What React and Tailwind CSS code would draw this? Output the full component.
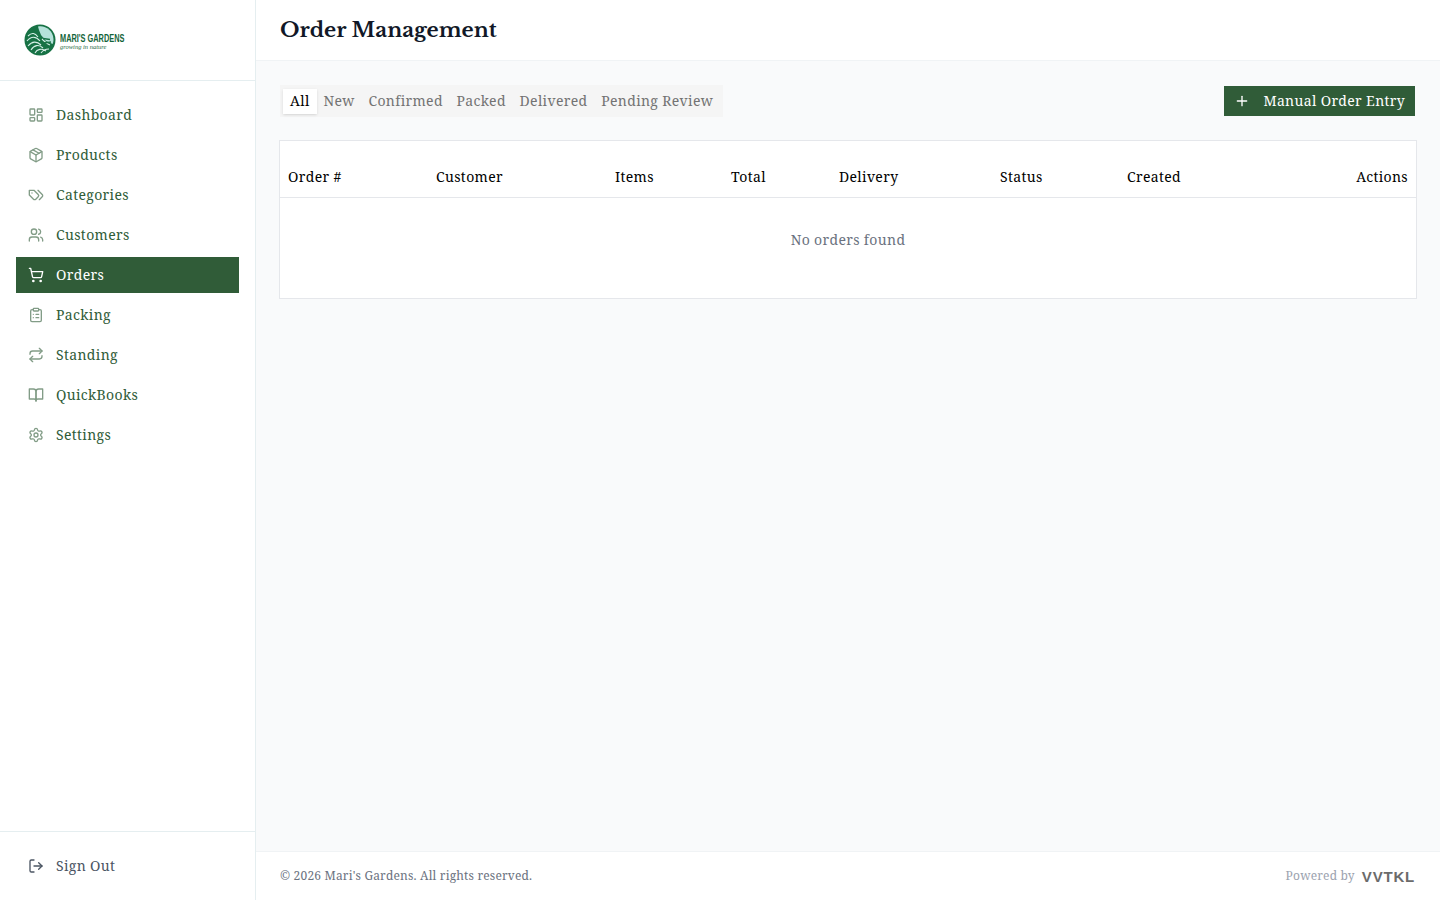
import {
  ClipboardList,
  LayoutDashboard,
  LogOut,
  Package,
  Plus,
  Repeat,
  Settings,
  ShoppingCart,
  Users,
} from 'lucide-react';

const TagsIcon = ({ size, strokeWidth, className }) => (
  <svg width={size} height={size} viewBox="0 0 24 24" fill="none" stroke="currentColor" strokeWidth={strokeWidth} strokeLinecap="round" strokeLinejoin="round" className={className}>
    <path d="M9 5H2v7l6.29 6.29c.94.94 2.48.94 3.42 0l3.58-3.58c.94-.94.94-2.48 0-3.42L9 5Z" />
    <path d="M6 9.01V9" />
    <path d="m15 5 6.3 6.3a2.4 2.4 0 0 1 0 3.4L17 19" />
  </svg>
);

const BookIcon = ({ size, strokeWidth, className }) => (
  <svg width={size} height={size} viewBox="0 0 24 24" fill="none" stroke="currentColor" strokeWidth={strokeWidth} strokeLinecap="round" strokeLinejoin="round" className={className}>
    <path d="M2 3h6a4 4 0 0 1 4 4v14a3 3 0 0 0-3-3H2z" />
    <path d="M22 3h-6a4 4 0 0 0-4 4v14a3 3 0 0 1 3-3h7z" />
  </svg>
);

const navItems = [
  { label: 'Dashboard', icon: LayoutDashboard },
  { label: 'Products', icon: Package },
  { label: 'Categories', icon: TagsIcon },
  { label: 'Customers', icon: Users },
  { label: 'Orders', icon: ShoppingCart, active: true },
  { label: 'Packing', icon: ClipboardList },
  { label: 'Standing', icon: Repeat },
  { label: 'QuickBooks', icon: BookIcon },
  { label: 'Settings', icon: Settings },
];

const tabs = ['New', 'Confirmed', 'Packed', 'Delivered', 'Pending Review'];

const columns = [
  { label: 'Order #', width: 'w-[148px]' },
  { label: 'Customer', width: 'w-[179px]' },
  { label: 'Items', width: 'w-[116px]' },
  { label: 'Total', width: 'w-[108px]' },
  { label: 'Delivery', width: 'w-[161px]' },
  { label: 'Status', width: 'w-[127px]' },
  { label: 'Created', width: 'w-[150px]' },
];

const Logo = () => (
  <div className="flex items-center gap-[4px]">
    <svg width="32" height="32" viewBox="0 0 32 32" fill="none">
      <circle cx="16" cy="16" r="15.5" fill="#177245" />
      <path d="M14 2.5C21 1 29 6 29.5 15C29.5 17 29.2 18.5 28.7 20L22 17L17 11L15 6Z" fill="#b5e2da" />
      <path d="M4 12C8 8 11 9 14 13M3 17C7 12 12 12 16 17M4 22C8 17 13 17 17 21M7 26C10 21 15 20 19 24M11 29C13 25 18 24 22 27M17 29C19 26 22 25 25 25M18 15C21 18 23 20 26 21" stroke="#d7efe8" strokeWidth="1.1" />
      <path d="M19 14.5L26 15.5M20 19L27 18" stroke="#177245" strokeWidth="1.3" />
    </svg>
    <div className="flex w-[65px] flex-col gap-[1px] pt-[3px]">
      <span className="origin-left scale-x-[0.67] font-['Liberation_Sans',sans-serif] text-[11px] leading-[10px] font-bold tracking-normal whitespace-nowrap text-[#14643a]">
        MARI'S GARDENS
      </span>
      <span className="font-['Liberation_Serif',serif] text-[6.5px] leading-[6px] tracking-normal italic whitespace-nowrap text-[#1f6b42]">
        growing in nature
      </span>
    </div>
  </div>
);

const App = () => {
  return (
    <div className="flex h-[900px] w-[1440px] overflow-hidden bg-[#f9fafb] font-['Noto_Serif','DejaVu_Serif',serif] text-sm tracking-wide">
      <aside className="flex w-[256px] shrink-0 flex-col border-r border-[#e5eef0] bg-white">
        <div className="flex h-[81px] items-center border-b border-[#e5eef0] pl-6">
          <Logo />
        </div>

        <nav className="flex flex-1 flex-col gap-1 px-4 pt-4">
          {navItems.map(({ label, icon: Icon, active }) => (
            <a
              key={label}
              className={
                active
                  ? 'flex h-9 items-center gap-3 bg-[#305c38] px-3 text-white'
                  : 'flex h-9 items-center gap-3 px-3 text-[#305c38]'
              }
            >
              <Icon size={16} strokeWidth={2} className={active ? '' : 'opacity-60'} />
              {label}
            </a>
          ))}
        </nav>

        <div className="flex h-[69px] items-center gap-3 border-t border-[#e5eef0] pl-7 text-[#4b5563]">
          <LogOut size={16} strokeWidth={2} />
          Sign Out
        </div>
      </aside>

      <div className="flex min-w-0 flex-1 flex-col">
        <header className="flex h-[61px] items-center border-b border-[#f0f3f5] bg-white px-6 pt-[2px]">
          <h1 className="font-['Libre_Baskerville','Liberation_Serif',serif] text-[20.7px] font-bold tracking-normal text-[#111827]">
            Order Management
          </h1>
        </header>

        <main className="flex-1 px-[23px] pt-6">
          <div className="flex items-center justify-between">
            <div className="ml-px flex h-8 items-center bg-[#f5f5f5] px-[3px]">
              <button className="h-[25px] bg-white px-[7px] text-black shadow-sm">All</button>
              {tabs.map((tab) => (
                <button key={tab} className="h-[25px] px-[6.85px] text-[#737373]">
                  {tab}
                </button>
              ))}
            </div>
            <button className="mr-[2px] flex h-[30px] items-center gap-[13px] bg-[#305c38] px-[10px] text-white">
              <Plus size={16} strokeWidth={2} />
              Manual Order Entry
            </button>
          </div>

          <div className="mt-[23px] border border-[#e5e7eb] bg-white">
            <table className="w-full table-fixed border-collapse">
              <thead>
                <tr className="h-[56px] border-b border-[#e5e7eb]">
                  {columns.map((col) => (
                    <th key={col.label} className={`${col.width} px-2 pt-[17px] text-left font-normal text-black`}>
                      {col.label}
                    </th>
                  ))}
                  <th className="px-2 pt-[17px] text-right font-normal text-black">Actions</th>
                </tr>
              </thead>
              <tbody>
                <tr>
                  <td colSpan={8} className="h-[101px] pb-[15px] text-center text-[#6b7280]">
                    No orders found
                  </td>
                </tr>
              </tbody>
            </table>
          </div>
        </main>

        <footer className="flex h-[49px] items-center justify-between border-t border-[#f0f3f5] bg-white pr-[25px] pl-6 text-xs tracking-[0.18px] text-[#6b7280]">
          <span>© 2026 Mari's Gardens. All rights reserved.</span>
          <div className="flex items-center gap-[7px]">
            <span className="text-[#9ca3af]">Powered by</span>
            <span className="font-['Liberation_Sans',sans-serif] text-[15px] leading-none font-bold tracking-[0.8px] text-[#6b6b6b]">
              VVTKL
            </span>
          </div>
        </footer>
      </div>
    </div>
  );
};

export default App;
